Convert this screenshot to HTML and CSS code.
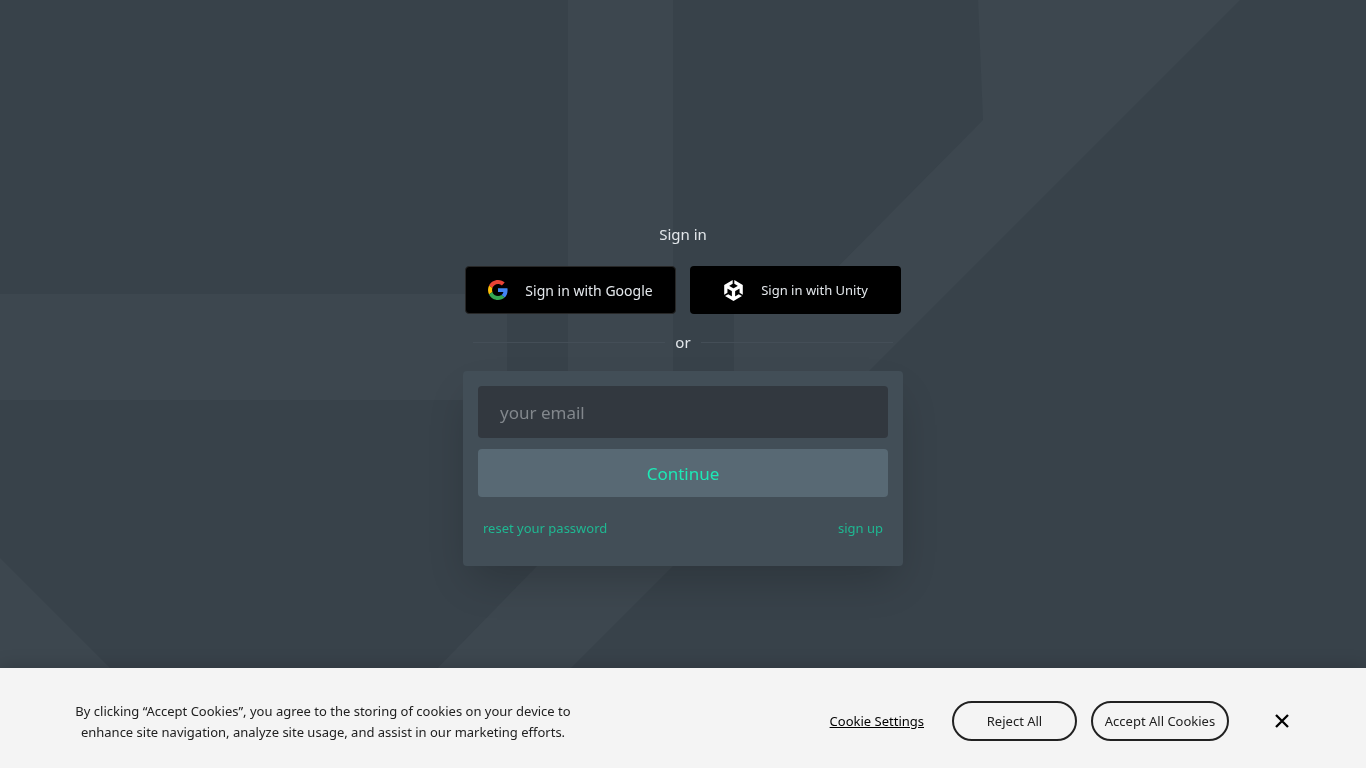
FILE: index.html
```html
<!DOCTYPE html>
<html lang="en">
<head>
	<meta charset="utf-8">
	<meta name="viewport" content="width=device-width, initial-scale=1">
	<title>Sign in</title>
	<link rel="stylesheet" href="styles.css">
</head>
<body>

<!-- background shapes -->
<svg class="backdrop" viewBox="0 0 1366 768" preserveAspectRatio="xMidYMid slice" aria-hidden="true">
	<path d="M568 0H673V400H568Z"/>
	<path d="M0 294H507V400H0Z"/>
	<path d="M978 0H1240L840 400H734V294H811L983 120Z"/>
	<path d="M0 558L210 768H0Z"/>
	<path d="M537 566H673L471 768H340Z"/>
</svg>

<main class="login">
	<h1 class="login__title">Sign in</h1>

	<div class="social">
		<button class="social__btn social__btn_google" type="button">
			<svg width="20" height="20" viewBox="0 0 48 48" aria-hidden="true">
				<path fill="#EA4335" d="M24 9.5c3.54 0 6.71 1.22 9.21 3.6l6.85-6.85C35.9 2.38 30.47 0 24 0 14.62 0 6.51 5.38 2.56 13.22l7.98 6.19C12.43 13.72 17.74 9.5 24 9.5z"/>
				<path fill="#4285F4" d="M46.98 24.55c0-1.57-.15-3.09-.38-4.55H24v9.02h12.94c-.58 2.96-2.26 5.48-4.78 7.18l7.73 6c4.51-4.18 7.09-10.36 7.09-17.65z"/>
				<path fill="#FBBC05" d="M10.53 28.59c-.48-1.45-.76-2.99-.76-4.59s.27-3.14.76-4.59l-7.98-6.19C.92 16.46 0 20.12 0 24c0 3.88.92 7.54 2.56 10.78l7.97-6.19z"/>
				<path fill="#34A853" d="M24 48c6.48 0 11.93-2.13 15.89-5.81l-7.73-6c-2.15 1.45-4.92 2.3-8.16 2.3-6.26 0-11.57-4.22-13.47-9.91l-7.98 6.19C6.51 42.62 14.62 48 24 48z"/>
			</svg>
			<span>Sign in with Google</span>
		</button>
		<button class="social__btn social__btn_unity" type="button">
			<svg width="21" height="21" viewBox="0 0 24 24" aria-hidden="true">
				<path fill="#fff" d="m12.9288 4.2939 3.7997 2.1929c.1366.077.1415.2905 0 .3675l-4.515 2.6076a.4192.4192 0 0 1-.4246 0L7.274 6.8543c-.139-.0745-.1415-.293 0-.3675l3.7972-2.193V0L1.3758 5.5977V16.793l3.7177-2.1456v-4.3858c-.0025-.1565.1813-.2682.318-.1838l4.5148 2.6076a.4252.4252 0 0 1 .2136.3676v5.2127c.0025.1565-.1813.2682-.3179.1838l-3.7996-2.1929-3.7178 2.1457L12 24l9.6954-5.5977-3.7178-2.1457-3.7996 2.1929c-.1341.082-.3229-.0248-.3179-.1838V13.053c0-.1565.087-.2956.2136-.3676l4.5149-2.6076c.134-.082.3228.0224.3179.1838v4.3858l3.7177 2.1456V5.5977L12.9288 0Z"/>
			</svg>
			<span>Sign in with Unity</span>
		</button>
	</div>

	<div class="divider"><span>or</span></div>

	<form class="card">
		<input class="card__input" type="email" placeholder="your email" aria-label="your email">
		<button class="card__submit" type="button">Continue</button>
		<div class="card__links">
			<a href="#">reset your password</a>
			<a href="#">sign up</a>
		</div>
	</form>
</main>

<!-- cookie banner -->
<section class="cookie" aria-label="Cookies">
	<p class="cookie__text">By clicking “Accept Cookies”, you agree to the storing of cookies on your device to enhance site navigation, analyze site usage, and assist in our marketing efforts.</p>
	<div class="cookie__actions">
		<a class="cookie__settings" href="#">Cookie Settings</a>
		<button class="cookie__btn cookie__btn_reject" type="button">Reject All</button>
		<button class="cookie__btn cookie__btn_accept" type="button">Accept All Cookies</button>
		<button class="cookie__close" type="button" aria-label="Close">
			<svg width="14" height="14" viewBox="0 0 14 14" aria-hidden="true">
				<path d="M1 1L13 13M13 1L1 13" stroke="#000" stroke-width="2.3"/>
			</svg>
		</button>
	</div>
</section>

</body>
</html>
```

FILE: styles.css
```css
*{
	box-sizing: border-box;
}
body{
	display: flex;
	flex-direction: column;
	min-height: 100vh;
	margin: 0;
	background: #38424a;
	font-family: "Noto Sans", "Open Sans", sans-serif;
	color: #e4e8ec;
}
button,
input{
	font-family: inherit;
}
button{
	cursor: pointer;
}
.backdrop{
	position: fixed;
	top: 0;
	left: 0;
	z-index: -1;
	width: 100%;
	height: 100%;
	fill: #3d474f;
}

/* sign in */
.login{
	flex: 1;
	display: flex;
	flex-direction: column;
	justify-content: center;
	align-items: center;
	padding: 120px 16px 0;
}
.login__title{
	margin: 0 0 20px;
	font-size: 15px;
	line-height: 24px;
	font-weight: 400;
}
.social{
	display: flex;
	align-items: center;
	gap: 14px;
}
.social__btn{
	display: flex;
	align-items: center;
	justify-content: center;
	gap: 17px;
	width: 211px;
	height: 48px;
	padding: 0;
	border: 0;
	border-radius: 4px;
	background: #000;
	font-size: 13px;
	color: #e4e8ec;
}
.social__btn_google{
	border: 1px solid #272727;
	font-size: 14px;
}
.divider{
	display: flex;
	align-items: center;
	gap: 10px;
	width: 100%;
	max-width: 420px;
	margin: 16px 0 17px;
	font-size: 15px;
	line-height: 24px;
}
.divider:before,
.divider:after{
	content: "";
	flex: 1;
	border-top: 1px solid #444e57;
}
.card{
	display: flex;
	flex-direction: column;
	width: 100%;
	max-width: 440px;
	padding: 15px 15px 28px;
	border-radius: 4px;
	background: #424e57;
	box-shadow: 0 20px 40px -8px rgba(0, 0, 0, 0.2);
}
.card__input{
	height: 52px;
	margin-bottom: 11px;
	padding: 0 22px;
	border: 0;
	border-radius: 4px;
	background: #32383f;
	font-size: 17px;
	color: #fff;
}
.card__input::placeholder{
	color: #82878c;
}
.card__submit{
	height: 48px;
	border: 0;
	border-radius: 4px;
	background: #586974;
	font-size: 17px;
	color: #1de9b6;
}
.card__links{
	display: flex;
	justify-content: space-between;
	margin-top: 21px;
	padding: 0 5px;
	font-size: 13px;
	line-height: 20px;
}
.card__links a{
	color: #1fb892;
	text-decoration: none;
}

/* cookie banner */
.cookie{
	display: flex;
	align-items: center;
	justify-content: space-between;
	min-height: 100px;
	padding: 0 77px 0 68px;
	background: #f4f4f4;
	box-shadow: 0 0 18px rgba(0, 0, 0, 0.2);
	font-size: 13px;
	color: #212121;
}
.cookie__text{
	width: 510px;
	margin: 8px 0 0;
	line-height: 21px;
	text-align: center;
}
.cookie__actions{
	display: flex;
	align-items: center;
	margin-top: 6px;
}
.cookie__settings{
	margin-right: 28px;
	color: #000;
}
.cookie__btn{
	height: 40px;
	padding: 0;
	border: 2px solid #212121;
	border-radius: 20px;
	background: transparent;
	font-size: 13px;
	color: #212121;
}
.cookie__btn_reject{
	width: 125px;
	margin-right: 14px;
}
.cookie__btn_accept{
	width: 138px;
}
.cookie__close{
	display: flex;
	margin-left: 46px;
	padding: 0;
	border: 0;
	background: none;
}
```
